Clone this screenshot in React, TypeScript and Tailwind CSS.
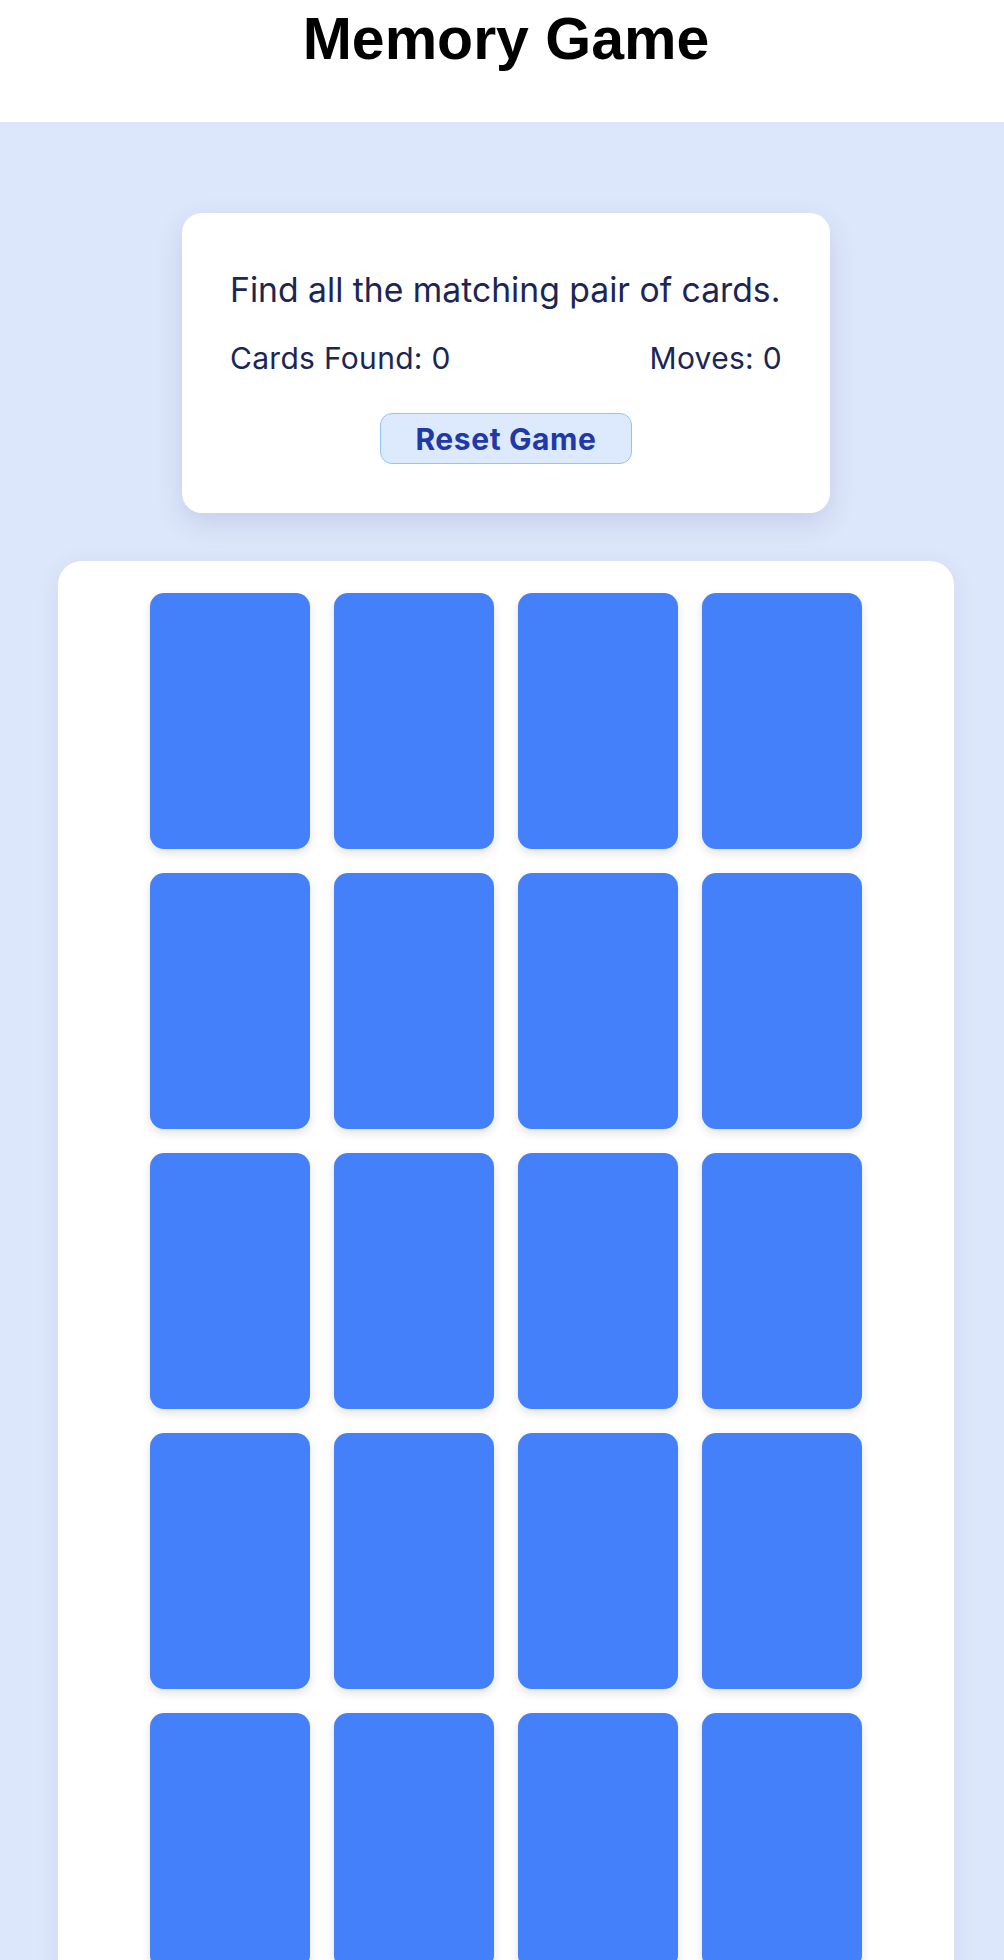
import React from "react";

export default function App() {
  const cards = Array.from({ length: 20 }, (_, i) => i);
  return (
    <div className="min-h-screen bg-[#dde7fb] font-['Inter',sans-serif]">
      <header className="h-[122px] bg-white flex justify-center pl-2">
        <h1 className="mt-[10px] text-[59px] leading-none font-bold text-black font-['Liberation_Sans',Arial,sans-serif]">
          Memory Game
        </h1>
      </header>
      <main className="pl-2 pt-[91px] flex flex-col items-center">
        <div className="w-[648px] bg-white rounded-[20px] shadow-[0_10px_28px_rgba(40,60,130,0.14)] px-12 pt-[57px] pb-[49px] text-[#1b2656]">
          <p className="text-[33.7px] leading-[40px] whitespace-nowrap">Find all the matching pair of cards.</p>
          <div className="mt-[30px] flex justify-between text-[30px] leading-[36px] tracking-[0.3px]">
            <span>Cards Found: 0</span>
            <span>Moves: 0</span>
          </div>
          <div className="mt-[37px] flex justify-center">
            <button className="w-[252px] h-[51px] rounded-xl border border-[#93c3fb] bg-[#dde9fd] text-[#2139a8] text-[30px] leading-[36px] tracking-[0.6px] font-bold flex items-center justify-center">
              Reset Game
            </button>
          </div>
        </div>
        <div className="mt-[48px] w-[896px] bg-white rounded-3xl shadow-[0_4px_24px_rgba(40,60,130,0.08)] py-8 grid grid-cols-[repeat(4,160px)] gap-6 justify-center">
          {cards.map((c) => (
            <div
              key={c}
              className="w-[160px] h-[256px] rounded-[14px] bg-[#4580fb] shadow-[0_4px_10px_rgba(0,0,0,0.12)]"
            />
          ))}
        </div>
      </main>
    </div>
  );
}
